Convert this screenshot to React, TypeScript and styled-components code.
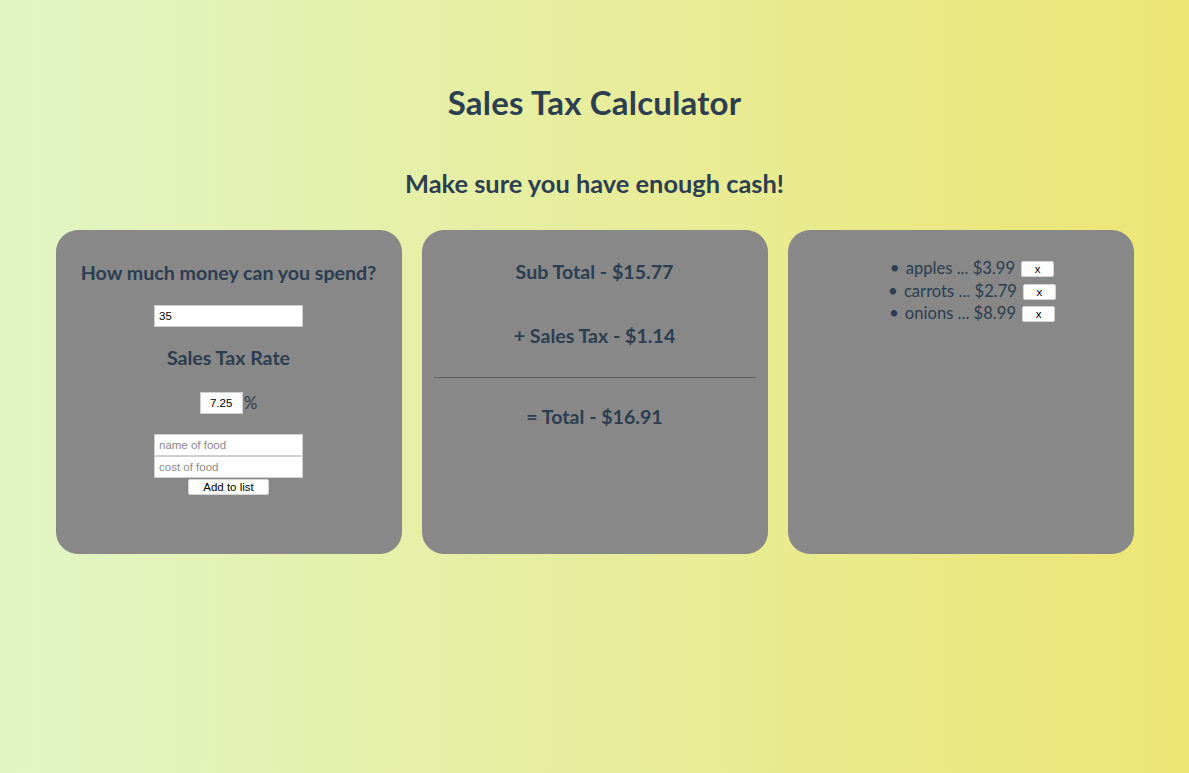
import React, { useState } from "react";
import styled, { createGlobalStyle } from "styled-components";

const Global = createGlobalStyle`
  html, body { margin: 0; padding: 0; }
  body {
    min-height: 773px;
    background: linear-gradient(to right, #e1f5c4, #ede574);
    font-family: "Lato", "Noto Sans", sans-serif;
    color: #2c3e50;
  }
`;

const Page = styled.div`
  display: flex;
  flex-direction: column;
  align-items: center;
  padding-top: 82px;
  min-height: 773px;
  box-sizing: border-box;
`;

const Title = styled.h1`
  margin: 0;
  font-size: 33px;
  line-height: 40px;
  font-weight: 700;
  letter-spacing: 0.2px;
`;

const Subtitle = styled.h2`
  margin: 46px 0 0;
  font-size: 25.4px;
  line-height: 30px;
  font-weight: 700;
`;

const Panels = styled.div`
  display: flex;
  gap: 20px;
  margin-top: 32px;
`;

const Panel = styled.div`
  width: 346px;
  height: 324px;
  background: #888888;
  border-radius: 22px;
  box-sizing: border-box;
  display: flex;
  flex-direction: column;
  align-items: center;
  padding: 0 12px;
`;

const Heading = styled.h3<{ $top: number }>`
  margin: ${(p) => p.$top}px 0 0;
  font-size: 19.6px;
  line-height: 22px;
  font-weight: 700;
  text-align: center;
  white-space: nowrap;
`;

const TextInput = styled.input<{ $top?: number; $width?: number; $center?: boolean }>`
  display: block;
  box-sizing: border-box;
  width: ${(p) => p.$width ?? 149}px;
  height: 22px;
  margin: ${(p) => p.$top ?? 0}px 0 0;
  padding: 1px 4px;
  border: 1px solid #cfcfcf;
  background: #fff;
  font-family: "Liberation Sans", Arial, sans-serif;
  font-size: 11.5px;
  color: #000;
  text-align: ${(p) => (p.$center ? "center" : "left")};
  outline: none;
  &::placeholder { color: #8a8a8a; }
`;

const RateRow = styled.div`
  display: flex;
  align-items: center;
  margin-top: 23px;
`;

const Percent = styled.span`
  font-size: 17px;
  margin-left: 1px;
  line-height: 22px;
`;

const FoodForm = styled.div`
  display: flex;
  flex-direction: column;
  align-items: center;
  margin-top: 20px;
`;

const SmallButton = styled.button<{ $width: number; $top?: number }>`
  box-sizing: border-box;
  width: ${(p) => p.$width}px;
  height: 16px;
  margin-top: ${(p) => p.$top ?? 0}px;
  padding: 0;
  background: #fff;
  border: 1px solid #d4d4d4;
  border-radius: 2px;
  font-family: "Liberation Sans", Arial, sans-serif;
  font-size: 11.5px;
  line-height: 14px;
  color: #000;
  cursor: pointer;
`;

const Rule = styled.hr`
  align-self: stretch;
  margin: 30px 0 0;
  border: 0;
  border-top: 1px solid #5f5f5f;
  height: 0;
`;

const List = styled.ul`
  margin: 27px 0 0;
  padding: 0 0 0 23px;
  text-align: center;
  align-self: stretch;
  list-style: none;
`;

const Item = styled.li`
  font-size: 16.6px;
  line-height: 22.5px;
  &::before {
    content: "•";
    display: inline-block;
    margin-right: 6px;
    font-size: 17px;
  }
`;

const ItemButton = styled(SmallButton)`
  margin-left: 6px;
  vertical-align: 1px;
`;

type Food = { name: string; cost: number };

export default function App() {
  const [budget, setBudget] = useState("35");
  const [rate, setRate] = useState("7.25");
  const [name, setName] = useState("");
  const [cost, setCost] = useState("");
  const [items, setItems] = useState<Food[]>([
    { name: "apples", cost: 3.99 },
    { name: "carrots", cost: 2.79 },
    { name: "onions", cost: 8.99 },
  ]);

  const sub = items.reduce((s, i) => s + i.cost, 0);
  const tax = (sub * parseFloat(rate || "0")) / 100;
  const total = sub + tax;

  const add = () => {
    const c = parseFloat(cost);
    if (!name || isNaN(c)) return;
    setItems([...items, { name, cost: c }]);
    setName("");
    setCost("");
  };

  return (
    <>
      <Global />
      <Page>
        <Title>Sales Tax Calculator</Title>
        <Subtitle>Make sure you have enough cash!</Subtitle>
        <Panels>
          <Panel>
            <Heading $top={32}>How much money can you spend?</Heading>
            <TextInput $top={21} value={budget} onChange={(e) => setBudget(e.target.value)} />
            <Heading $top={20}>Sales Tax Rate</Heading>
            <RateRow>
              <TextInput $width={43} $center value={rate} onChange={(e) => setRate(e.target.value)} />
              <Percent>%</Percent>
            </RateRow>
            <FoodForm>
              <TextInput placeholder="name of food" value={name} onChange={(e) => setName(e.target.value)} />
              <TextInput placeholder="cost of food" value={cost} onChange={(e) => setCost(e.target.value)} />
              <SmallButton $width={81} $top={1} onClick={add}>Add to list</SmallButton>
            </FoodForm>
          </Panel>
          <Panel>
            <Heading $top={31}>Sub Total - ${sub.toFixed(2)}</Heading>
            <Heading $top={42}>+ Sales Tax - ${tax.toFixed(2)}</Heading>
            <Rule />
            <Heading $top={28}>= Total - ${total.toFixed(2)}</Heading>
          </Panel>
          <Panel>
            <List>
              {items.map((it, idx) => (
                <Item key={idx}>
                  {it.name} ... ${it.cost.toFixed(2)}
                  <ItemButton $width={33} onClick={() => setItems(items.filter((_, j) => j !== idx))}>x</ItemButton>
                </Item>
              ))}
            </List>
          </Panel>
        </Panels>
      </Page>
    </>
  );
}
